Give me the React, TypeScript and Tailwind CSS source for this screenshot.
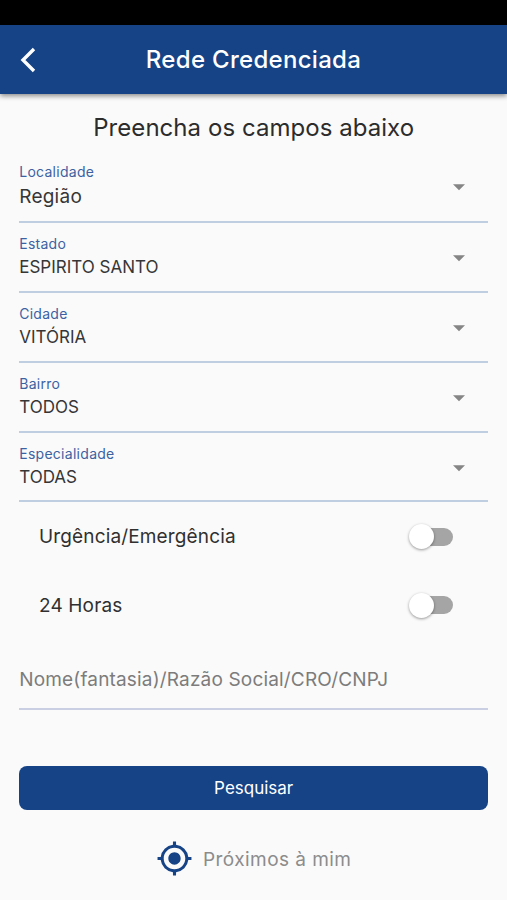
import React from 'react';

type FieldProps = {
  label: string;
  value: string;
  large?: boolean;
};

const Field = ({ label, value, large }: FieldProps) => (
  <button
    type="button"
    className={`flex w-full shrink-0 items-start border-b-2 border-[#c0cee1] text-left ${large ? 'h-[72px]' : 'h-[69.75px]'}`}
  >
    <span className="flex flex-1 flex-col">
      <span className="mt-[11px] text-[14px] leading-[20px] tracking-[0.28px] text-[#3c62a2]">{label}</span>
      <span
        className={`text-[#363636] ${large ? 'mt-[2px] text-[19px] leading-[26px] tracking-[0.25px]' : 'mt-[1px] text-[17px] leading-[24px]'}`}
      >
        {value}
      </span>
    </span>
    <svg className={`mr-[23px] h-[7px] w-[12px] ${large ? 'mt-[33px]' : 'mt-[32px]'}`} viewBox="0 0 12 7">
      <path d="M0 0.3h12l-6 6z" fill="#858585" />
    </svg>
  </button>
);

const Toggle = ({ label }: { label: string }) => (
  <label className="flex h-[68.5px] items-center justify-between pr-[35px] pl-[19.8px]">
    <span className="pt-px text-[19px] leading-6 tracking-[0.15px] text-[#303030]">{label}</span>
    <span className="flex h-[18px] w-[43px] items-center rounded-full bg-[#a5a5a5]">
      <span className="-ml-px size-[25px] rounded-full bg-white shadow-[0_1px_3px_rgba(0,0,0,0.4)]" />
    </span>
  </label>
);

const App = () => {
  return (
    <div className="flex h-[900px] w-[507px] flex-col overflow-hidden bg-[#fafafa] font-['Inter',sans-serif]">
      <div className="h-[25px] shrink-0 bg-black" />
      <header className="grid h-[69px] shrink-0 grid-cols-[60px_1fr_60px] items-center bg-[#164386] shadow-[0_2px_5px_rgba(0,0,0,0.45)]">
        <svg className="ml-5 h-[26px] w-4" viewBox="0 0 16 26" fill="none">
          <path d="M14 2 3 13l11 11" stroke="white" strokeWidth="3.4" />
        </svg>
        <h1 className="text-center text-[24px] font-medium tracking-[0.3px] text-white">Rede Credenciada</h1>
      </header>

      <main className="flex flex-1 flex-col pr-[18.8px] pl-[19.2px]">
        <h2 className="mt-[18px] h-[39.4px] text-center text-[24px] leading-[32px] tracking-[0.05px] text-[#2c2c2c]">
          Preencha os campos abaixo
        </h2>
        <Field label="Localidade" value="Região" large />
        <Field label="Estado" value="ESPIRITO SANTO" />
        <Field label="Cidade" value="VITÓRIA" />
        <Field label="Bairro" value="TODOS" />
        <Field label="Especialidade" value="TODAS" />

        <Toggle label="Urgência/Emergência" />
        <Toggle label="24 Horas" />

        <input
          className="mt-[10.6px] h-[60px] w-full shrink-0 border-b-2 border-[#cbcfe3] bg-transparent pt-[2px] text-[19px] tracking-[0.17px] outline-none placeholder:text-[#7c7c7c]"
          placeholder="Nome(fantasia)/Razão Social/CRO/CNPJ"
        />

        <button
          type="button"
          className="mt-[56px] h-[44px] shrink-0 rounded-lg bg-[#164386] pt-[2px] text-[17px] text-white"
        >
          Pesquisar
        </button>
        <button
          type="button"
          className="mt-[30px] flex items-center justify-center gap-[10px] text-[19px] tracking-[0.45px] text-[#8c8c8c]"
        >
          <svg className="size-[37px]" viewBox="0 0 24 24" fill="#164386">
            <path d="M12 8c-2.21 0-4 1.79-4 4s1.79 4 4 4 4-1.79 4-4-1.79-4-4-4zm8.94 3A8.994 8.994 0 0 0 13 3.06V1h-2v2.06A8.994 8.994 0 0 0 3.06 11H1v2h2.06A8.994 8.994 0 0 0 11 20.94V23h2v-2.06A8.994 8.994 0 0 0 20.94 13H23v-2h-2.06zM12 19c-3.87 0-7-3.13-7-7s3.13-7 7-7 7 3.13 7 7-3.13 7-7 7z" />
          </svg>
          <span className="pt-[3px]">Próximos à mim</span>
        </button>
      </main>
    </div>
  );
};

export default App;
